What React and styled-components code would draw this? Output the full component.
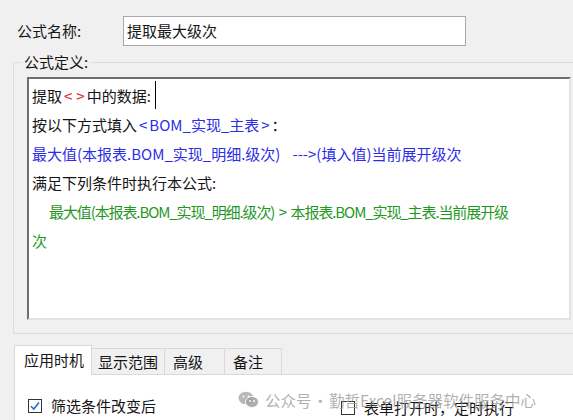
import React from 'react';
import styled, { createGlobalStyle } from 'styled-components';

const Global = createGlobalStyle`
  html, body {
    margin: 0;
    background: #f0f0f0;
    overflow: hidden;
  }
  body {
    font-family: "Noto Sans CJK SC", "Noto Sans", sans-serif;
    color: #151515;
  }
`

const Page = styled.div`
  width: 573px;
  height: 420px;
  padding: 16px 0 0 13px;
  box-sizing: border-box;
  position: relative;
  overflow: hidden;
`

const NameRow = styled.div`
  display: flex;
  align-items: center;
  height: 30px;
`

const Label = styled.span`
  width: 110px;
  padding-left: 4px;
  box-sizing: border-box;
  font-size: 15px;
  line-height: 20px;
`

const NameInput = styled.div`
  width: 343px;
  height: 30px;
  box-sizing: border-box;
  border: 1px solid #a9a9a9;
  background: #fff;
  padding-left: 3px;
  font-size: 15px;
  line-height: 28px;
`

const Group = styled.fieldset`
  margin: 7px 0 0 0;
  width: 580px;
  box-sizing: border-box;
  border: 1px solid #dcdcdc;
  padding: 6px 0 13px 0;
  min-width: 0;
`

const Legend = styled.legend`
  margin-left: 7px;
  padding: 0 3px;
  font-size: 15px;
  line-height: 18px;
`

const Editor = styled.div`
  margin-left: 13px;
  width: 544px;
  height: 243px;
  box-sizing: border-box;
  background: #fff;
  border-style: solid;
  border-width: 2px;
  border-color: #6f6f6f #e2e2e2 #e2e2e2 #6f6f6f;
  padding: 2px 0 0 3px;
  font-size: 15px;
`

const Line = styled.div`
  line-height: 29px;
  height: 29px;
  white-space: pre;
  color: ${p => p.$color || '#151515'};
  padding-left: ${p => p.$indent || 0}px;
  letter-spacing: ${p => p.$tight || 0}px;
`

const Tint = styled.span`
  color: ${p => p.$color};
`

const Bracket = styled.span`
  margin: 0 2px;
`

const Gap = styled.span`
  display: inline-block;
  width: ${p => p.$w}px;
`

const Caret = styled.span`
  display: inline-block;
  width: 1px;
  height: 28px;
  background: #000;
  margin-left: 4px;
  vertical-align: top;
`

const TabBar = styled.div`
  display: flex;
  align-items: flex-end;
  margin: 10px 0 0 1px;
  height: 30px;
`

const Tab = styled.div`
  width: ${p => p.$w}px;
  height: ${p => (p.$active ? 30 : 26)}px;
  box-sizing: border-box;
  border: 1px solid #d9d9d9;
  border-bottom: none;
  border-left: ${p => (p.$first ? '1px solid #d9d9d9' : 'none')};
  background: ${p => (p.$active ? '#fff' : '#f0f0f0')};
  padding-left: ${p => p.$pad}px;
  font-size: 15px;
  line-height: ${p => (p.$active ? 28 : 26)}px;
  position: relative;
  z-index: 1;
  margin-bottom: ${p => (p.$active ? -1 : 0)}px;
`

const Panel = styled.div`
  margin-left: 1px;
  height: 60px;
  background: #fff;
  border-top: 1px solid #d9d9d9;
  border-left: 1px solid #d9d9d9;
  display: flex;
  align-items: flex-start;
  padding: 21px 0 0 13px;
`

const Check = styled.label`
  display: flex;
  align-items: center;
  gap: 9px;
  font-size: 15px;
  line-height: 20px;
  margin-top: ${p => p.$top || 0}px;
  margin-right: ${p => p.$right || 0}px;
`

const Box = styled.span`
  width: 14px;
  height: 14px;
  box-sizing: border-box;
  border: 1px solid #333;
  background: #fff;
  display: flex;
  align-items: center;
  justify-content: center;
`

const Watermark = styled.div`
  position: absolute;
  left: 238px;
  top: 390px;
  display: flex;
  align-items: center;
  gap: 6px;
  font-size: 15.5px;
  line-height: 20px;
  color: rgba(150, 150, 150, 0.75);
  white-space: pre;
  pointer-events: none;
`

const Dot = styled.span`
  margin: 0 1px;
`

const Blue = '#2d2de6'
const Green = '#1f981f'
const Red = '#e42222'

function Tick() {
  return (
    <svg width="12" height="12" viewBox="0 0 12 12">
      <path d="M2 6.2 L4.8 9 L10 2.6" fill="none" stroke="#1e6fd0" strokeWidth="1.6" />
    </svg>
  )
}

function WeChat() {
  return (
    <svg width="21" height="18" viewBox="0 0 21 18">
      <ellipse cx="8" cy="7" rx="7.5" ry="6.3" fill="rgba(160,160,160,0.75)" />
      <ellipse cx="14" cy="11" rx="6.5" ry="5.5" fill="rgba(160,160,160,0.85)" stroke="#f8f8f8" strokeWidth="1" />
      <circle cx="5.5" cy="5.5" r="1" fill="#fff" />
      <circle cx="10.5" cy="5.5" r="1" fill="#fff" />
      <circle cx="12" cy="10" r="0.9" fill="#fff" />
      <circle cx="16" cy="10" r="0.9" fill="#fff" />
    </svg>
  )
}

export default function App() {
  return (
    <Page>
      <Global />
      <NameRow>
        <Label>公式名称:</Label>
        <NameInput>提取最大级次</NameInput>
      </NameRow>
      <Group>
        <Legend>公式定义:</Legend>
        <Editor>
          <Line>提取<Tint $color={Red}><Bracket>&lt;</Bracket><Bracket>&gt;</Bracket></Tint>中的数据:<Caret /></Line>
          <Line>按以下方式填入<Tint $color={Blue}><Bracket>&lt;</Bracket>BOM_实现_主表<Bracket>&gt;</Bracket></Tint>：</Line>
          <Line $color={Blue}>最大值(本报表.BOM_实现_明细.级次)<Gap $w={12} />---&gt;(填入值)当前展开级次</Line>
          <Line>满足下列条件时执行本公式:</Line>
          <Line $color={Green} $indent={17} $tight={-1.1}>最大值(本报表.BOM_实现_明细.级次)  &gt;  本报表.BOM_实现_主表.当前展开级</Line>
          <Line $color={Green}>次</Line>
        </Editor>
      </Group>
      <TabBar>
        <Tab $w={78} $pad={9} $active $first>应用时机</Tab>
        <Tab $w={73} $pad={6}>显示范围</Tab>
        <Tab $w={60} $pad={8}>高级</Tab>
        <Tab $w={57} $pad={8}>备注</Tab>
      </TabBar>
      <Panel>
        <Check $right={185}>
          <Box><Tick /></Box>
          筛选条件改变后
        </Check>
        <Check $top={2}>
          <Box />
          表单打开时，定时执行
        </Check>
      </Panel>
      <Watermark>
        <WeChat />
        <span>公众号<Dot>·</Dot>勤哲Excel服务器软件服务中心</span>
      </Watermark>
    </Page>
  )
}
